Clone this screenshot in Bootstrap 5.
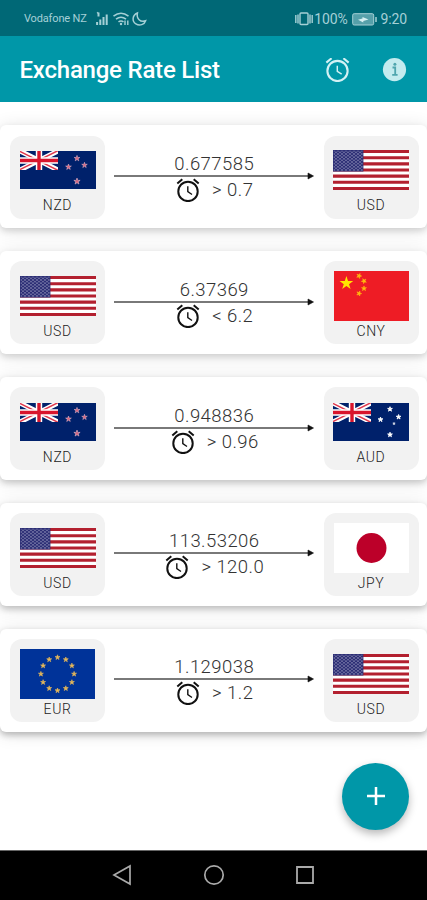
<!DOCTYPE html>
<html lang="en">
<head>
<meta charset="utf-8">
<meta name="viewport" content="width=device-width, initial-scale=1">
<title>Exchange Rate List</title>
<link href="https://cdn.jsdelivr.net/npm/bootstrap@5.3.0/dist/css/bootstrap.min.css" rel="stylesheet">
<style>
body{font-family:Roboto,"Liberation Sans",sans-serif;background:#fff}
svg{display:block;flex:none}
.screen{height:900px;overflow:hidden}
.status-strip{height:36px;background:#006876;color:#a5d0d6;padding:2px 20px 0 24px}
.carrier{font-size:11px;letter-spacing:-.15px;width:71px}
.status-num{font-size:14px;line-height:1;letter-spacing:-.15px}
.app-header{height:66px;background:#0097a8;padding:2px 20px 0 19.5px}
.app-title{font-size:24px;font-weight:500;color:#fff;letter-spacing:-.22px;line-height:1}
.info-icon{margin-left:32px}
.rates{padding-top:23px;gap:22.6px}
.rate-card{--sh:.12;height:103.3px;border:0;border-radius:6px;padding:10.5px 8.5px 0 10px;box-shadow:0 3px 6px rgba(0,0,0,var(--sh)),0 2px 18px rgba(0,0,0,.12)}
.rate-card:nth-child(3){--sh:.17}
.rate-card:nth-child(4){--sh:.2}
.rate-card:nth-child(5){--sh:.24}
.tile{width:95px;height:83px;border-radius:12px;background:#f2f2f2;padding-top:9.5px}
.flag-slot{height:50px}
.code{font-size:14px;font-weight:300;letter-spacing:.6px;line-height:16px;color:#222;margin-top:2px}
.quote{width:200px;padding-top:17.3px;color:#333}
.quote-num{font-size:18.5px;letter-spacing:.45px;line-height:22px;font-weight:300}
.arrow-line{margin-top:-3px}
.alarm-row{gap:12px;height:26px;margin-top:-3px;padding-left:1px;color:#111}
.alarm-row .quote-num{color:#333}
.fab{right:18px;bottom:20px;width:67px;height:67px;background:#0097a8;box-shadow:0 4px 9px rgba(0,0,0,.28)}
.nav-keys{height:50.5px;background:#000;border-top:1px solid #666;padding:0 112px}
</style>
<script src="https://cdn.jsdelivr.net/npm/bootstrap@5.3.0/dist/js/bootstrap.bundle.min.js"></script>
</head>
<body>
<svg width="0" height="0" class="position-absolute">
<defs>
<path id="star" d="M0-1 .225-.309.951-.309.363.118.588.809 0 .382-.588.809-.363.118-.951-.309-.225-.309z"/>
<symbol id="jack" viewBox="0 0 38 19">
<path fill="#00216b" d="M0 0h38v19H0z"/>
<path d="M0 0l38 19M38 0L0 19" stroke="#fff" stroke-width="5"/>
<path d="M0 .4l38 19M38-.4L0 18.6" stroke="#e0384c" stroke-width="1.4"/>
<path d="M19 0v19M0 9.5h38" stroke="#fff" stroke-width="6.4"/>
<path d="M19 0v19M0 9.5h38" stroke="#d8142c" stroke-width="3.4"/>
</symbol>
<symbol id="nz" viewBox="0 0 76 38">
<path fill="#00216b" d="M0 0h76v38H0z"/>
<use href="#jack" width="38" height="19"/>
<g fill="#d9607a" stroke="#dfb0c4" stroke-width=".2">
<use href="#star" transform="translate(57 7.4) scale(3)"/><use href="#star" transform="translate(48.5 16) scale(3)"/>
<use href="#star" transform="translate(64.5 14.2) scale(2.9)"/><use href="#star" transform="translate(57 30.4) scale(3.3)"/>
</g>
</symbol>
<symbol id="au" viewBox="0 0 76 38">
<path fill="#00216b" d="M0 0h76v38H0z"/>
<use href="#jack" width="38" height="19"/>
<g fill="#fff" stroke="#fff" stroke-width=".35">
<use href="#star" transform="translate(57 6.2) scale(2.5)"/><use href="#star" transform="translate(47.5 16.6) scale(2.5)"/>
<use href="#star" transform="translate(65.6 14) scale(2.5)"/><use href="#star" transform="translate(57 31.7) scale(2.5)"/>
<use href="#star" transform="translate(61 20.6) scale(1.3)"/>
</g>
</symbol>
<pattern id="dots" width="4" height="3.2" patternUnits="userSpaceOnUse"><circle cx="1" cy=".8" r=".65" fill="#d5d5e8"/><circle cx="3" cy="2.4" r=".65" fill="#d5d5e8"/></pattern>
<symbol id="us" viewBox="0 0 76 40">
<path fill="#fff" d="M0 0h76v40H0z"/>
<path d="M0 1.54h76M0 7.69h76M0 13.85h76M0 20h76M0 26.15h76M0 32.3h76M0 38.46h76" stroke="#b3202f" stroke-width="3.08"/>
<path fill="#2b2d74" d="M0 0h30.4v21.5H0z"/><path fill="url(#dots)" d="M.7.7h29v20.2H.7z"/>
</symbol>
<symbol id="cn" viewBox="0 0 75 50">
<path fill="#ee1c25" d="M0 0h75v50H0z"/>
<g fill="#ffe600"><use href="#star" transform="translate(12.4 12.3) scale(7.2)"/></g>
<g fill="#ffc30c" stroke="#ffb010" stroke-width=".25">
<use href="#star" transform="translate(25 4.9) rotate(22) scale(2.6)"/><use href="#star" transform="translate(30 10) rotate(45) scale(2.6)"/>
<use href="#star" transform="translate(30 17.5) scale(2.6)"/><use href="#star" transform="translate(25 22.5) rotate(20) scale(2.6)"/></g>
</symbol>
<symbol id="jp" viewBox="0 0 75 50"><path fill="#fff" d="M0 0h75v50H0z"/><circle cx="37.5" cy="25" r="15" fill="#bc0029"/></symbol>
<symbol id="eu" viewBox="0 0 75 50">
<path fill="#003399" d="M0 0h75v50H0z"/>
<g fill="#e9bd5a" stroke="#e0b45a" stroke-width=".25" transform="translate(37.5 25)">
<use href="#star" transform="translate(0 -16.6) scale(2.6)"/><use href="#star" transform="translate(8.3 -14.4) scale(2.6)"/><use href="#star" transform="translate(14.4 -8.3) scale(2.6)"/>
<use href="#star" transform="translate(16.6 0) scale(2.6)"/><use href="#star" transform="translate(14.4 8.3) scale(2.6)"/><use href="#star" transform="translate(8.3 14.4) scale(2.6)"/>
<use href="#star" transform="translate(0 16.6) scale(2.6)"/><use href="#star" transform="translate(-8.3 14.4) scale(2.6)"/><use href="#star" transform="translate(-14.4 8.3) scale(2.6)"/>
<use href="#star" transform="translate(-16.6 0) scale(2.6)"/><use href="#star" transform="translate(-14.4 -8.3) scale(2.6)"/><use href="#star" transform="translate(-8.3 -14.4) scale(2.6)"/>
</g>
</symbol>
<symbol id="alarm" viewBox="0 0 24 24">
<g fill="none" stroke="currentColor"><circle cx="12" cy="13.4" r="9.7" stroke-width="2"/><path d="M11.8 8.3v5.4l4.2 2.8" stroke-width="1.4"/><path d="M1.3 5.4l5-4.2M22.7 5.4l-5-4.2" stroke-width="2"/></g>
</symbol>
<symbol id="arrow" viewBox="0 0 200 8"><path d="M0 4h196" stroke="#4c4c4c" stroke-width="1.6"/><path d="M194 1l5.5 3-5.5 3z" fill="#111" stroke="#111" stroke-width=".6"/></symbol>
</defs>
</svg>

<div class="screen d-flex flex-column position-relative">
<div class="status-strip d-flex align-items-center flex-shrink-0">
<span class="carrier text-nowrap">Vodafone NZ</span>
<svg width="52" height="16" viewBox="0 0 52 16" fill="none" stroke="currentColor">
<path d="M2.1 14v-3M5.300 14V8.500M8.500 14V6M11.700 14V3.500M3.500 1.500v4M2.200 2.500l1.300-1" stroke-width="2"/>
<path d="M18.5 5.1q7.500-5.600 15 0M21 8.200q5-3.800 10 0M23.500 10.900q2.500-1.800 5 0" stroke-width="1.600"/><circle cx="26" cy="13" r="1.200" fill="currentColor" stroke="none"/><path d="M30 9.500V14M32.800 9.500V14" stroke-width="1.400"/>
<path d="M42.400 2c-5.300 2.300-5.600 8.300-1.500 10.900 3.800 2.400 8.600.6 9.700-3.100-5.300 2-9.300-2.300-8.200-7.800z" stroke-width="1.500"/>
</svg>
<div class="d-flex align-items-center ms-auto">
<svg width="18" height="14" viewBox="0 0 18 14" fill="none" stroke="currentColor" stroke-width="1.4"><rect x="5" y="1" width="8" height="11.500" rx="1"/><path d="M3 2.500v9M.8 3v8M15 2.500v9M17.200 3v8"/></svg>
<span class="status-num ps-0 ms-0 me-1">&#8202;100%</span>
<svg width="25" height="13" viewBox="0 0 25 13"><rect x=".7" y=".7" width="21" height="11.300" rx="1.500" fill="#56a0aa" stroke="currentColor"/><path d="M24 4v5" stroke="currentColor" stroke-width="1.500"/><path d="M6 6.800l4.500-1.200V4l6 2.500-5.200 1.600v1.500z" fill="#d6eff2"/></svg>
<span class="status-num ms-1">9:20</span>
</div>
</div>
<header class="app-header d-flex align-items-center flex-shrink-0">
<h1 class="app-title mb-0 me-auto text-nowrap">Exchange Rate List</h1>
<svg width="25" height="25" color="#d3f1f4"><use href="#alarm" width="25" height="25" y="-1"/></svg>
<svg width="25" height="25" viewBox="0 0 25 25" class="info-icon"><circle cx="12.500" cy="11.600" r="11.600" fill="#c4ebef"/><path d="M10.500 9.500h2.700v7M10.200 16.800h5.400" stroke="#4fa5ae" stroke-width="1.800" fill="none"/><circle cx="12.900" cy="6.200" r="1.500" fill="#4fa5ae"/></svg>
</header>
<main class="rates d-flex flex-column flex-grow-1">
<section class="rate-card card flex-row justify-content-between flex-shrink-0">
<div class="tile text-center"><div class="flag-slot d-flex align-items-center justify-content-center"><svg width="76" height="38"><use href="#nz"/></svg></div><div class="code">NZD</div></div>
<div class="quote text-center"><div class="quote-num">0.677585</div><svg width="200" height="8" class="arrow-line"><use href="#arrow"/></svg><div class="alarm-row d-flex align-items-center justify-content-center"><svg width="24" height="24"><use href="#alarm"/></svg><span class="quote-num">&gt; 0.7</span></div></div>
<div class="tile text-center"><div class="flag-slot d-flex align-items-center justify-content-center"><svg width="76" height="40"><use href="#us"/></svg></div><div class="code">USD</div></div>
</section>
<section class="rate-card card flex-row justify-content-between flex-shrink-0">
<div class="tile text-center"><div class="flag-slot d-flex align-items-center justify-content-center"><svg width="76" height="40"><use href="#us"/></svg></div><div class="code">USD</div></div>
<div class="quote text-center"><div class="quote-num">6.37369</div><svg width="200" height="8" class="arrow-line"><use href="#arrow"/></svg><div class="alarm-row d-flex align-items-center justify-content-center"><svg width="24" height="24"><use href="#alarm"/></svg><span class="quote-num">&lt; 6.2</span></div></div>
<div class="tile text-center"><div class="flag-slot d-flex align-items-center justify-content-center"><svg width="75" height="50"><use href="#cn"/></svg></div><div class="code">CNY</div></div>
</section>
<section class="rate-card card flex-row justify-content-between flex-shrink-0">
<div class="tile text-center"><div class="flag-slot d-flex align-items-center justify-content-center"><svg width="76" height="38"><use href="#nz"/></svg></div><div class="code">NZD</div></div>
<div class="quote text-center"><div class="quote-num">0.948836</div><svg width="200" height="8" class="arrow-line"><use href="#arrow"/></svg><div class="alarm-row d-flex align-items-center justify-content-center"><svg width="24" height="24"><use href="#alarm"/></svg><span class="quote-num">&gt; 0.96</span></div></div>
<div class="tile text-center"><div class="flag-slot d-flex align-items-center justify-content-center"><svg width="76" height="38"><use href="#au"/></svg></div><div class="code">AUD</div></div>
</section>
<section class="rate-card card flex-row justify-content-between flex-shrink-0">
<div class="tile text-center"><div class="flag-slot d-flex align-items-center justify-content-center"><svg width="76" height="40"><use href="#us"/></svg></div><div class="code">USD</div></div>
<div class="quote text-center"><div class="quote-num">113.53206</div><svg width="200" height="8" class="arrow-line"><use href="#arrow"/></svg><div class="alarm-row d-flex align-items-center justify-content-center"><svg width="24" height="24"><use href="#alarm"/></svg><span class="quote-num">&gt; 120.0</span></div></div>
<div class="tile text-center"><div class="flag-slot d-flex align-items-center justify-content-center"><svg width="75" height="50"><use href="#jp"/></svg></div><div class="code">JPY</div></div>
</section>
<section class="rate-card card flex-row justify-content-between flex-shrink-0">
<div class="tile text-center"><div class="flag-slot d-flex align-items-center justify-content-center"><svg width="75" height="50"><use href="#eu"/></svg></div><div class="code">EUR</div></div>
<div class="quote text-center"><div class="quote-num">1.129038</div><svg width="200" height="8" class="arrow-line"><use href="#arrow"/></svg><div class="alarm-row d-flex align-items-center justify-content-center"><svg width="24" height="24"><use href="#alarm"/></svg><span class="quote-num">&gt; 1.2</span></div></div>
<div class="tile text-center"><div class="flag-slot d-flex align-items-center justify-content-center"><svg width="76" height="40"><use href="#us"/></svg></div><div class="code">USD</div></div>
</section>
</main>
<div class="position-relative">
<button class="fab btn rounded-circle border-0 p-0 position-absolute d-flex align-items-center justify-content-center" aria-label="Add rate"><svg width="18" height="18" viewBox="0 0 18 18"><path d="M9 0v18M0 9h18" stroke="#fff" stroke-width="2.500"/></svg></button>
</div>
<nav class="nav-keys d-flex align-items-center justify-content-between flex-shrink-0">
<svg width="20" height="22" viewBox="0 0 20 22" fill="none" stroke="#aaa" stroke-width="1.700"><path d="M18 2v18L2 11z"/></svg>
<svg width="22" height="22" viewBox="0 0 22 22" fill="none" stroke="#aaa" stroke-width="1.700"><circle cx="11" cy="11" r="9.200"/></svg>
<svg width="20" height="20" viewBox="0 0 20 20" fill="none" stroke="#aaa" stroke-width="1.800"><path d="M2 2h16v16H2z"/></svg>
</nav>
</div>
</body>
</html>
